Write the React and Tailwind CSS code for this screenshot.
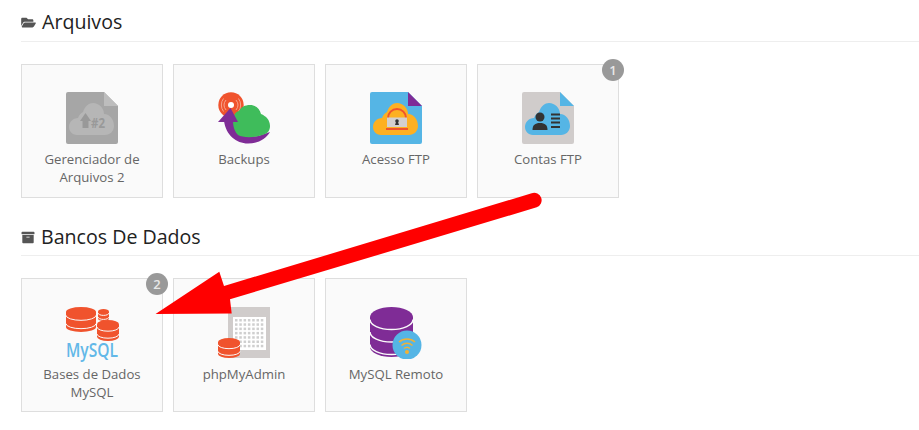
import { FaFolderOpen, FaArchive } from "react-icons/fa";

const CLOUD = "M11 43C6 43 3 39 3 35C3 30 7 26 12 26C13 23 15 21 17 20C19 14 23 11 27 11C33 11 38 16 38 22C44 22 48 28 48 34C48 39 44 43 39 43Z";

function FileShape({ fill }) {
  return <path d="M2 0H38L52 14V50a2 2 0 0 1-2 2H2a2 2 0 0 1-2-2V2a2 2 0 0 1 2-2Z" fill={fill} />;
}

function IconFiles() {
  return (
    <svg width="52" height="52" viewBox="0 0 52 52">
      <FileShape fill="#a6a6a6" />
      <path d="M38 0L52 14H38Z" fill="#bdbdbd" />
      <path d={CLOUD} fill="#b6b6b6" />
      <path d="M19.500 21L25 29H22.500V36H16.500V29H14Z" fill="#999999" />
      <text x="25" y="36" fontSize="14" fontWeight="700" fill="#999999" textLength="14" lengthAdjust="spacingAndGlyphs" fontFamily="'Open Sans', sans-serif">#2</text>
    </svg>
  );
}

function IconBackups() {
  return (
    <svg width="52" height="52" viewBox="0 0 52 52">
      <circle cx="13" cy="13" r="12.700" fill="#f0532d" />
      <g fill="none" stroke="#f7a58e" strokeWidth="1">
        <path d="M8 8a8 8 0 0 0 0 10" />
        <path d="M5.500 6.500a11 11 0 0 0 0 13" />
        <path d="M18 8a8 8 0 0 1 0 10" />
        <path d="M20.500 6.500a11 11 0 0 1 0 13" />
      </g>
      <circle cx="13" cy="13" r="3" fill="#ffffff" />
      <path d="M6 29C8 43 18 51.500 30 51.500C40 51.500 48 47 52 40L40 44C30 45 19 43 18 29Z" fill="#7f2c96" />
      <path d="M15 29C15 24 17 20 21 19C23 15 27 13 32 13C38 13 42 17 43 22C48 24 52 28 52 34C52 38 50 41 47 42C38 46 25 46 20 43C17 40 15 35 15 29Z" fill="#3fbc5b" />
      <path d="M12.500 16L20 30H0Z" fill="#7f2c96" />
    </svg>
  );
}

function IconFtp() {
  return (
    <svg width="52" height="52" viewBox="0 0 52 52">
      <FileShape fill="#55b5e5" />
      <path d="M38 0L52 14H38Z" fill="#7f2c96" />
      <path d={CLOUD} fill="#fdb022" />
      <path d="M18 26a9 9 0 0 1 18 0" fill="none" stroke="#f0532d" strokeWidth="2" />
      <rect x="17" y="25.500" width="20" height="9.500" fill="#d4d0ce" />
      <rect x="16" y="36" width="22" height="2" fill="#f0532d" />
      <circle cx="27" cy="29" r="1.800" fill="#333333" />
      <path d="M26 30H28L29 33H25Z" fill="#333333" />
    </svg>
  );
}

function IconAccounts() {
  return (
    <svg width="52" height="52" viewBox="0 0 52 52">
      <FileShape fill="#d0cccb" />
      <path d="M38 0L52 14H38Z" fill="#55b5e5" />
      <path d={CLOUD} fill="#55b5e5" />
      <circle cx="18" cy="25" r="4.500" fill="#333333" />
      <path d="M10.500 38C10.500 33 13 31 18 31C23 31 25.500 33 25.500 38Z" fill="#333333" />
      <g fill="#333333">
        <rect x="29" y="21.500" width="9" height="2" />
        <rect x="29" y="25.500" width="9" height="2" />
        <rect x="29" y="29.500" width="9" height="2" />
        <rect x="29" y="34" width="9" height="2" />
      </g>
    </svg>
  );
}

// stacked database drawn as one can with the background colour as separators
function Db({ x, y, w, h, fill, gap = "#fafafa", bands = 2 }) {
  const ry = h * 0.2;
  const lines = [];
  for (let i = 0; i < bands; i++) lines.push(y + (h * (i + 1)) / (bands + 1));
  return (
    <g>
      <path d={`M${x} ${y + ry}a${w / 2} ${ry} 0 0 1 ${w} 0V${y + h - ry}a${w / 2} ${ry} 0 0 1 ${-w} 0Z`} fill={fill} />
      {lines.map((ly) => (
        <path key={ly} d={`M${x} ${ly}a${w / 2} ${ry} 0 0 0 ${w} 0`} fill="none" stroke={gap} strokeWidth={h > 25 ? 1.500 : 1} />
      ))}
    </g>
  );
}

function IconMysql() {
  return (
    <svg width="52" height="52" viewBox="0 0 52 52" overflow="visible">
      <Db x={0} y={0} w={30} h={25} fill="#f0532d" bands={2} />
      <Db x={32} y={2} w={11} h={12} fill="#f0532d" bands={2} />
      <Db x={31} y={13} w={22} h={21} fill="#f0532d" bands={2} />
      <text x="0" y="50" fontSize="20" fontWeight="600" fill="#62b8e8" textLength="52" lengthAdjust="spacingAndGlyphs" fontFamily="'Open Sans', sans-serif">MySQL</text>
    </svg>
  );
}

function IconPhp() {
  const dots = [];
  for (let r = 0; r < 7; r++) {
    for (let c = 0; c < 7; c++) dots.push([c, r]);
  }
  return (
    <svg width="52" height="52" viewBox="0 0 52 52">
      <rect x="10" y="0" width="42" height="51" fill="#d0cccb" />
      <rect x="15" y="10" width="33" height="33" fill="#ffffff" />
      {dots.map(([c, r]) => (
        <rect key={`${c}-${r}`} x={17 + c * 4.300} y={12 + r * 4.300} width="2.500" height="2.500" fill="#cfcfcf" />
      ))}
      <Db x={0} y={31} w={22} h={20} fill="#f0532d" bands={2} />
    </svg>
  );
}

function IconRemote() {
  return (
    <svg width="52" height="52" viewBox="0 0 52 52">
      <Db x={0} y={0} w={43} h={50} fill="#7f2c96" bands={3} />
      <circle cx="37" cy="38" r="14.500" fill="#55b5e5" />
      <g fill="none" stroke="#f2b134" strokeWidth="1.400">
        <path d="M29 35a12 12 0 0 1 16 0" />
        <path d="M31.500 38.500a8 8 0 0 1 11 0" />
        <path d="M34 41.500a4.500 4.500 0 0 1 6 0" />
      </g>
      <circle cx="37" cy="45" r="2" fill="#f2b134" />
    </svg>
  );
}

function Card({ icon, label, badge, low }) {
  return (
    <div className={`relative flex h-[134px] w-[142px] flex-col items-center border border-[#dedede] bg-[#fafafa] px-2 text-center text-[13.2px] leading-[18px] text-[#666666] ${low ? "pt-[28px]" : "pt-[27px]"}`}>
      {badge && (
        <span className="absolute right-[-6px] top-[-6px] flex h-[22px] w-[22px] items-center justify-center rounded-full bg-[#999999] text-[13px] font-semibold leading-none text-[#e8e8e8]">
          {badge}
        </span>
      )}
      {icon}
      <div className="mt-[6px]">{label}</div>
    </div>
  );
}

function Section({ icon, title, low, children }) {
  return (
    <section>
      <h2 className={`flex h-[42px] items-center gap-[6px] border-b border-[#eeeeee] text-[19.6px] font-normal leading-none text-[#222222] ${low ? "pt-[5px]" : "pt-[3px]"}`}>
        {icon}
        {title}
      </h2>
      <div className="mt-[22px] flex gap-[10px]">{children}</div>
    </section>
  );
}

export default function App() {
  return (
    <div className="relative h-[430px] w-[919px] overflow-hidden bg-white font-['Open_Sans',sans-serif]">
      <div className="flex flex-col gap-[16px] pl-[21px]">
        <Section icon={<FaFolderOpen className="h-[13px] w-[15px] text-[#555555]" />} title="Arquivos">
          <Card icon={<IconFiles />} label={<>Gerenciador de<br />Arquivos 2</>} />
          <Card icon={<IconBackups />} label="Backups" />
          <Card icon={<IconFtp />} label="Acesso FTP" />
          <Card icon={<IconAccounts />} label="Contas FTP" badge="1" />
        </Section>
        <Section low icon={<FaArchive className="h-[13px] w-[14px] text-[#555555]" />} title="Bancos De Dados">
          <Card low icon={<IconMysql />} label={<>Bases de Dados<br />MySQL</>} badge="2" />
          <Card low icon={<IconPhp />} label="phpMyAdmin" />
          <Card low icon={<IconRemote />} label="MySQL Remoto" />
        </Section>
      </div>
      {/* annotation arrow drawn over the page */}
      <svg className="pointer-events-none absolute left-0 top-0" width="919" height="430" viewBox="0 0 919 430">
        <path
          d="M155.500 314L219.300 271.700L224 286L531.700 193.300A7.400 7.400 0 0 1 536.700 207.300L230 299.300L231.700 313.500Z"
          fill="#ff0000"
        />
      </svg>
    </div>
  );
}
